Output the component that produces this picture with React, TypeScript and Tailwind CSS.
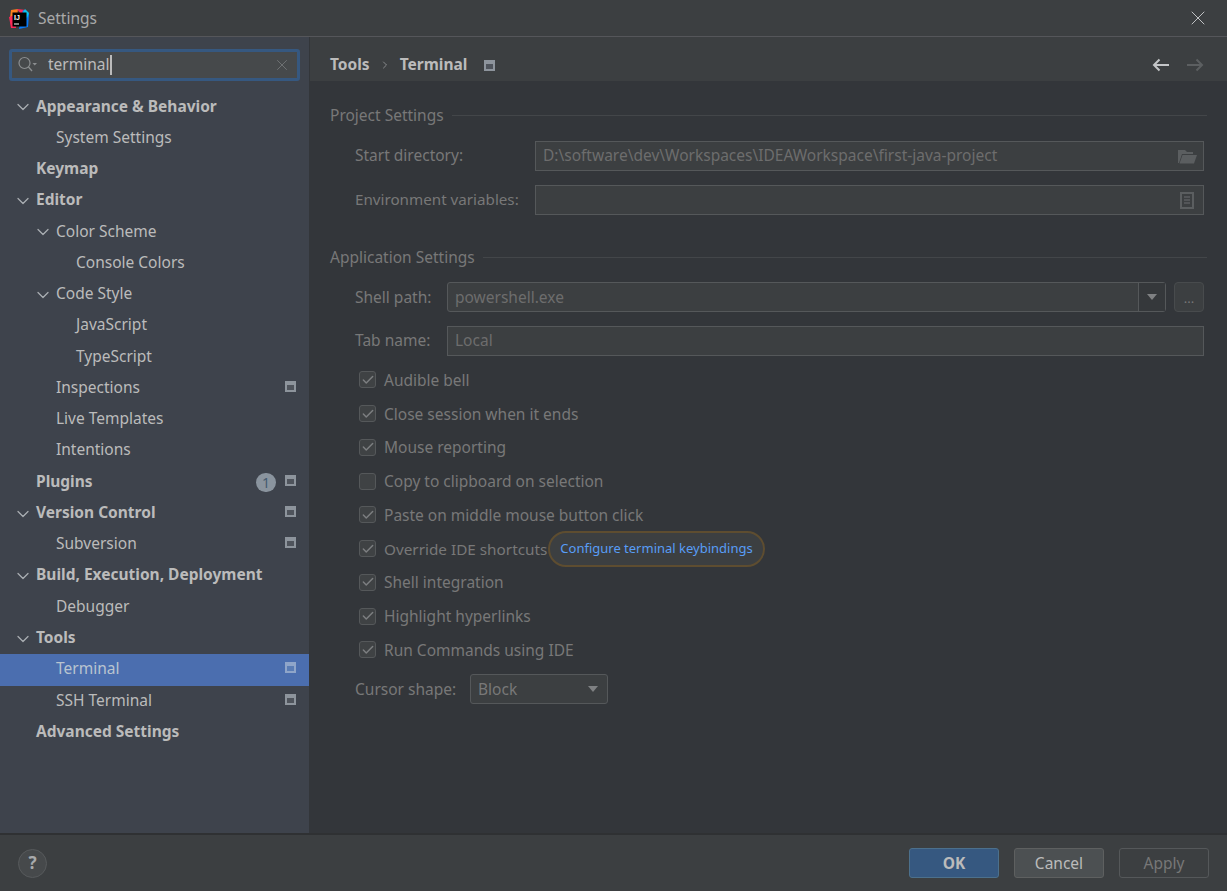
import { Check, ChevronDown, ChevronRight, X } from "lucide-react";

const font = "font-['Noto_Sans','Open_Sans',sans-serif]";

type TreeRow = {
  label: string;
  depth: number;
  bold?: boolean;
  open?: boolean;
  selected?: boolean;
  project?: boolean;
  badge?: string;
};

const tree: TreeRow[] = [
  { label: "Appearance & Behavior", depth: 0, bold: true, open: true },
  { label: "System Settings", depth: 1 },
  { label: "Keymap", depth: 0, bold: true },
  { label: "Editor", depth: 0, bold: true, open: true },
  { label: "Color Scheme", depth: 1, open: true },
  { label: "Console Colors", depth: 2 },
  { label: "Code Style", depth: 1, open: true },
  { label: "JavaScript", depth: 2 },
  { label: "TypeScript", depth: 2 },
  { label: "Inspections", depth: 1, project: true },
  { label: "Live Templates", depth: 1 },
  { label: "Intentions", depth: 1 },
  { label: "Plugins", depth: 0, bold: true, project: true, badge: "1" },
  { label: "Version Control", depth: 0, bold: true, open: true, project: true },
  { label: "Subversion", depth: 1, project: true },
  { label: "Build, Execution, Deployment", depth: 0, bold: true, open: true },
  { label: "Debugger", depth: 1 },
  { label: "Tools", depth: 0, bold: true, open: true },
  { label: "Terminal", depth: 1, selected: true, project: true },
  { label: "SSH Terminal", depth: 1, project: true },
  { label: "Advanced Settings", depth: 0, bold: true },
];

const checks = [
  { label: "Audible bell", on: true },
  { label: "Close session when it ends", on: true },
  { label: "Mouse reporting", on: true },
  { label: "Copy to clipboard on selection", on: false },
  { label: "Paste on middle mouse button click", on: true },
  { label: "Override IDE shortcuts", on: true, link: true },
  { label: "Shell integration", on: true },
  { label: "Highlight hyperlinks", on: true },
  { label: "Run Commands using IDE", on: true },
];

function ProjectIcon({ light }: { light?: boolean }) {
  return (
    <span
      className={`flex h-[11px] w-[11px] shrink-0 items-end justify-center pb-[2px] ${
        light ? "bg-[#8fa5c9]" : "bg-[#8d949c]"
      }`}
    >
      <span className={`h-[5px] w-[7px] ${light ? "bg-[#5a7cb4]" : "bg-[#4f545c]"}`} />
    </span>
  );
}

function Logo() {
  return (
    <svg width="20" height="20" viewBox="0 0 20 20" className="mt-[2px] shrink-0">
      <path d="M2 1 L9 0 L8 8 L1 9 Z" fill="#fc801d" />
      <path d="M0 8 L6 6 L7 19 L2 19 Z" fill="#fe2857" />
      <path d="M8 0 L17 1 L19 8 L14 8 Z" fill="#fe2857" />
      <path d="M14 1 L20 5 L19 18 L10 20 L12 9 Z" fill="#087cfa" />
      <path d="M16 0 L20 4 L18 9 L13 5 Z" fill="#07c3f2" />
      <rect x="3.5" y="3.5" width="14" height="14" fill="#000" />
      <text x="5" y="10.5" fontSize="7" fontWeight="700" fill="#fff" fontFamily="Liberation Sans, sans-serif">
        IJ
      </text>
      <rect x="5" y="14.5" width="5" height="1" fill="#fff" />
    </svg>
  );
}

function SidebarRow({ row }: { row: TreeRow }) {
  return (
    <div
      className={`flex h-[31.28px] shrink-0 items-center pr-[13px] ${
        row.selected ? "bg-[#4b6eaf] text-[#b9c4cf]" : "text-[#bbbbbb]"
      }`}
    >
      <div className={row.depth === 0 ? "w-[36px] shrink-0" : row.depth === 1 ? "w-[56px] shrink-0" : "w-[76px] shrink-0"}>
        {row.open && (
          <ChevronDown
            size={20}
            strokeWidth={1.5}
            className={`text-[#a9adb2] ${row.depth === 0 ? "ml-[12.5px]" : "ml-[32.5px]"}`}
          />
        )}
      </div>
      <span className={`flex-1 whitespace-nowrap pb-[2px] text-[15.5px] ${row.bold ? "font-bold" : ""}`}>{row.label}</span>
      {row.badge && (
        <span className="mr-[9px] flex h-[19px] w-[20px] items-center justify-center rounded-full bg-[#8a949e] text-[14px] text-[#44596f]">
          {row.badge}
        </span>
      )}
      {row.project && (
        <span className="mb-[4px]">
          <ProjectIcon light={row.selected} />
        </span>
      )}
    </div>
  );
}

function SectionTitle({ title }: { title: string }) {
  return (
    <div className="flex h-[24px] items-center gap-[8px]">
      <span className="whitespace-nowrap pt-[2px] text-[15.5px] text-[#787878]">{title}</span>
      <div className="h-px flex-1 bg-[#434649]" />
    </div>
  );
}

function TextField({ value, icon }: { value?: string; icon?: React.ReactNode }) {
  return (
    <div className="flex h-[30px] flex-1 items-center justify-between border border-[#55585a] bg-[#3c3f41] pl-[7px] pr-[6px] text-[15.5px] text-[#6d6d6d]">
      <span className="pb-[1px]">{value}</span>
      {icon}
    </div>
  );
}

function CheckRow({ label, on, link }: { label: string; on: boolean; link?: boolean }) {
  return (
    <div className="flex h-[33.75px] items-center">
      <span className="flex h-[17px] w-[17px] shrink-0 items-center justify-center rounded-[3px] border border-[#55585a] bg-[#3f4244]">
        {on && <Check size={14} strokeWidth={2.5} className="text-[#7d7f81]" />}
      </span>
      <span className={`ml-[8px] whitespace-nowrap pt-[1px] text-[#787878] ${link ? "text-[15.3px]" : "text-[15.5px]"}`}>
        {label}
      </span>
      {link && (
        <span className="ml-[1px] flex h-[36px] items-center rounded-full border-[2px] border-[#5e4d30] bg-[#3c3f41] px-[10px] text-[13px] text-[#589df6]">
          Configure terminal keybindings
        </span>
      )}
    </div>
  );
}

function Caret() {
  return <span className="h-0 w-0 border-x-[5.5px] border-t-[6px] border-x-transparent border-t-[#7f8183]" />;
}

export default function App() {
  return (
    <div className={`flex h-[891px] w-[1227px] flex-col overflow-hidden bg-[#33363a] ${font}`}>
      {/* title bar */}
      <div className="flex h-[37px] shrink-0 items-center border-b border-[#55565a] bg-[#3c3f41] pl-[9px] pr-[17px] text-[15.5px] text-[#a9a9a9]">
        <Logo />
        <span className="ml-[9px] flex-1 pt-[2px]">Settings</span>
        <X size={24} strokeWidth={1} className="text-[#c0c2c4]" />
      </div>

      <div className="flex min-h-0 flex-1">
        {/* sidebar */}
        <div className="flex w-[310px] shrink-0 flex-col border-r border-[#33363a] bg-[#3e434c]">
          <div className="px-[9px] pb-[10.5px] pt-[12px]">
            <div className="flex h-[32px] items-center rounded-[3px] border-[3px] border-[#365880] bg-[#46494b] pl-[6px] pr-[6px]">
              <svg width="20" height="18" viewBox="0 0 20 18" fill="none" className="shrink-0">
                <circle cx="6.5" cy="7" r="5.5" stroke="#8b8e90" strokeWidth="1.2" />
                <path d="M10.5 11 L14 15" stroke="#8b8e90" strokeWidth="1.4" />
                <path d="M14.5 7 H19 L16.75 9.5 Z" fill="#8b8e90" />
              </svg>
              <span className="ml-[10px] text-[15.5px] text-[#bbbbbb]">terminal</span>
              <span className="h-[20px] w-[2px] bg-[#bbbbbb]" />
              <span className="flex-1" />
              <X size={18} strokeWidth={1.3} className="text-[#6f7274]" />
            </div>
          </div>
          <div className="flex flex-col">
            {tree.map((row) => (
              <SidebarRow key={row.label} row={row} />
            ))}
          </div>
        </div>

        {/* main panel */}
        <div className="flex min-w-0 flex-1 flex-col">
          <div className="flex h-[44px] shrink-0 items-center bg-[#3c3f41] pl-[20px] pr-[23px] pt-[12px] text-[15.5px] font-bold text-[#bbbbbb]">
            <span>Tools</span>
            <ChevronRight size={12} strokeWidth={1.5} className="ml-[9px] text-[#a0a2a4]" />
            <span className="ml-[9px]">Terminal</span>
            <span className="ml-[17px]">
              <ProjectIcon />
            </span>
            <span className="flex-1" />
            <svg width="18" height="14" viewBox="0 0 18 14" fill="none" className="text-[#c4c6c8]">
              <path d="M17 7 H2 M7.5 1.5 L2 7 L7.5 12.5" stroke="currentColor" strokeWidth="2" />
            </svg>
            <svg width="18" height="14" viewBox="0 0 18 14" fill="none" className="ml-[16px] text-[#5c5f61]">
              <path d="M1 7 H16 M10.5 1.5 L16 7 L10.5 12.5" stroke="currentColor" strokeWidth="2" />
            </svg>
          </div>

          <div className="flex flex-col pl-[20px] pr-[20px] pt-[22px]">
            <SectionTitle title="Project Settings" />
            <div className="mt-[14px] flex flex-col gap-[14px] pl-[25px] pr-[3px]">
              <div className="flex items-center">
                <span className="w-[180px] whitespace-nowrap text-[15.5px] text-[#787878]">Start directory:</span>
                <TextField
                  value="D:\software\dev\Workspaces\IDEAWorkspace\first-java-project"
                  icon={
                    <svg width="19" height="15" viewBox="0 0 19 15" fill="#5b5e60">
                      <path d="M0 1 H7 L9 3 H15 V5 H4 L1 14 H0 Z" />
                      <path d="M4.5 6 H19 L16 14.5 H1.5 Z" />
                    </svg>
                  }
                />
              </div>
              <div className="flex items-center">
                <span className="w-[180px] whitespace-nowrap pb-[2px] text-[15.2px] text-[#787878]">Environment variables:</span>
                <TextField
                  icon={
                    <svg width="14" height="17" viewBox="0 0 14 17" fill="none" className="mr-[3px]">
                      <rect x="0" y="0" width="14" height="17" fill="#5b5e60" />
                      <rect x="2" y="2" width="10" height="13" fill="#3c3f41" />
                      <path d="M4 5 H10 M4 8 H10 M4 11 H10" stroke="#5b5e60" strokeWidth="1.3" />
                    </svg>
                  }
                />
              </div>
            </div>

            <div className="mt-[30px]">
              <SectionTitle title="Application Settings" />
            </div>
            <div className="mt-[13px] flex flex-col pl-[25px] pr-[3px]">
              <div className="flex items-center">
                <span className="w-[92px] whitespace-nowrap pt-[2px] text-[15.5px] text-[#787878]">Shell path:</span>
                <div className="flex h-[30px] flex-1 items-center rounded-[3px] border border-[#55585a] bg-[#3c3f41] text-[15.5px] text-[#6d6d6d]">
                  <span className="flex-1 pl-[7px] pt-[1px]">powershell.exe</span>
                  <span className="flex h-full w-[27px] items-center justify-center border-l border-[#55585a] bg-[#35383b]">
                    <Caret />
                  </span>
                </div>
                <span className="ml-[8px] flex h-[30px] w-[30px] items-center justify-center rounded-[4px] border border-[#484b4d] bg-[#3c3f41] pt-[2px] text-[13px] leading-none text-[#787878]">
                  ...
                </span>
              </div>
              <div className="mt-[14px] flex items-center">
                <span className="w-[92px] whitespace-nowrap pb-[1px] text-[15.5px] text-[#787878]">Tab name:</span>
                <TextField value="Local" />
              </div>

              <div className="ml-[4px] mt-[7px] flex flex-col">
                {checks.map((c) => (
                  <CheckRow key={c.label} label={c.label} on={c.on} link={c.link} />
                ))}
              </div>

              <div className="mt-[7px] flex items-center">
                <span className="w-[115px] whitespace-nowrap pt-[1px] text-[15.5px] text-[#787878]">Cursor shape:</span>
                <div className="flex h-[30px] w-[138px] items-center justify-between rounded-[3px] border border-[#55585a] bg-[#3c3f41] pl-[7px] pr-[9px] text-[15.5px] text-[#787878]">
                  <span className="pt-[1px]">Block</span>
                  <Caret />
                </div>
              </div>
            </div>
          </div>
        </div>
      </div>

      {/* footer */}
      <div className="flex h-[58px] shrink-0 items-center border-t-[2px] border-[#2f3133] bg-[#3c3f41] pl-[18px] pr-[18px]">
        <span className="flex h-[29px] w-[29px] items-center justify-center rounded-full border border-[#575a5c] bg-[#46494b] text-[17px] font-bold text-[#a8aaac]">
          ?
        </span>
        <span className="flex-1" />
        <span className="flex h-[30px] w-[90px] items-center justify-center rounded-[3px] border border-[#4c708c] bg-[#365880] pt-[1px] text-[15.5px] font-bold text-[#bbbbbb]">
          OK
        </span>
        <span className="ml-[15px] flex h-[30px] w-[90px] items-center justify-center rounded-[3px] border border-[#5e6060] bg-[#4c5052] pt-[1px] text-[15.5px] text-[#bbbbbb]">
          Cancel
        </span>
        <span className="ml-[15px] flex h-[30px] w-[90px] items-center justify-center rounded-[3px] border border-[#55585a] bg-[#3c3f41] pt-[1px] text-[15.5px] text-[#777777]">
          Apply
        </span>
      </div>
    </div>
  );
}
